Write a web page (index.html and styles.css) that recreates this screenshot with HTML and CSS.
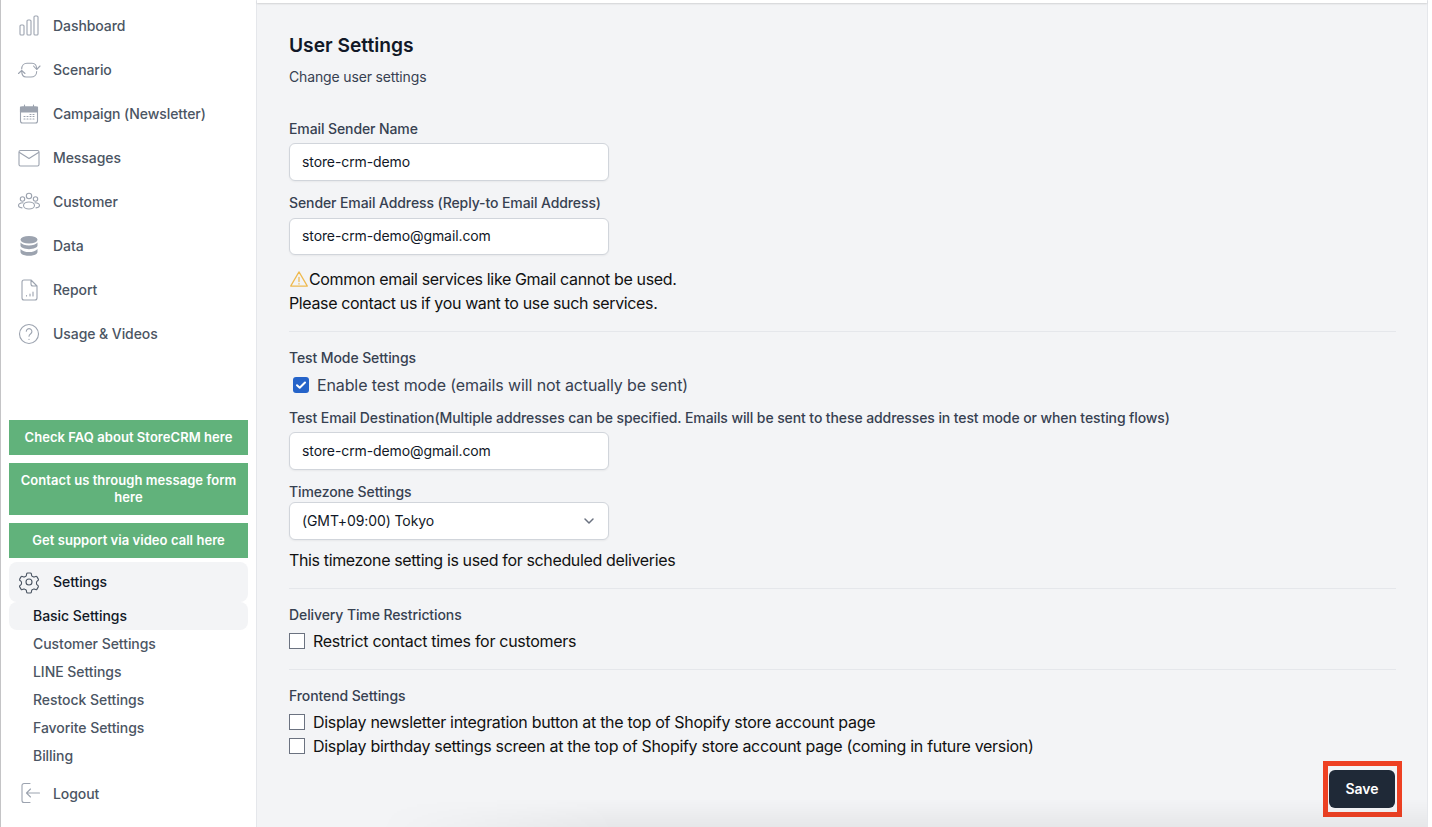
FILE: index.html
```html
<!DOCTYPE html>
<html lang="en">
<head>
<meta charset="utf-8">
<title>User Settings</title>
<link rel="stylesheet" href="styles.css">
</head>
<body>
<div class="app">
  <aside class="sidebar">
    <nav class="nav">
      <a class="nav-item"><svg class="icon" viewBox="0 0 24 24"><path d="M3 12.100c0-.6.5-1.100 1.100-1.100h1.800c.6 0 1.100.5 1.100 1.100v7.800c0 .6-.5 1.100-1.100 1.100H4.100C3.500 21 3 20.500 3 19.900zM10 7.100C10 6.500 10.500 6 11.100 6h1.800c.6 0 1.100.5 1.100 1.100v12.800c0 .6-.5 1.100-1.100 1.100h-1.800c-.6 0-1.100-.5-1.100-1.100zM17 3.100C17 2.500 17.500 2 18.100 2h1.800c.6 0 1.100.5 1.100 1.100v16.800c0 .6-.5 1.100-1.100 1.100h-1.800c-.6 0-1.100-.5-1.100-1.100z"/></svg>Dashboard</a>
      <a class="nav-item"><svg class="icon" viewBox="0 0 24 24"><path d="M4.700 11C4.700 7.500 7 5.300 10 5.300h5c3 0 4.700 2 4.700 6M16.500 8l3.200 3.500L23 8M19.700 13.500c0 3.500-2.700 5.500-5.700 5.500H9c-2.500 0-4.300-2-4.300-6M1.500 15.500l3.200-3 3.300 3"/></svg>Scenario</a>
      <a class="nav-item"><svg class="icon" viewBox="0 0 24 24"><rect x="3.500" y="5" width="17" height="16" rx="2"/><path class="solid" d="M3.500 5h17v5h-17z"/><path d="M7.500 3v3M16.500 3v3M7 17h1M10 17h1M13 17h1M7 14.500h1M10 14.500h1M13 14.500h1M16 14.500h1M13 12.500h1M16 12.500h1M16 17h1"/></svg>Campaign (Newsletter)</a>
      <a class="nav-item"><svg class="icon" viewBox="0 0 24 24"><rect x="2" y="4.500" width="20" height="15.500" rx="1.500"/><path d="m2.500 6.500 9.500 6 9.500-6"/></svg>Messages</a>
      <a class="nav-item"><svg class="icon" viewBox="0 0 24 24"><circle cx="12" cy="6" r="2.700"/><circle cx="5.500" cy="9" r="2.200"/><circle cx="18.500" cy="9" r="2.200"/><ellipse cx="12" cy="15.500" rx="5.500" ry="3.500"/><path d="M6 12.800c-2.500.2-4.500 1.300-4.500 2.700 0 1.200 1.500 2.100 3.500 2.400M18 12.800c2.500.2 4.500 1.300 4.500 2.700 0 1.200-1.500 2.100-3.500 2.400"/></svg>Customer</a>
      <a class="nav-item"><svg class="icon icon-fill" viewBox="0 0 24 24"><ellipse cx="12" cy="5.800" rx="8.500" ry="3.800"/><path d="M3.500 8.600v3c0 2 3.800 3.600 8.500 3.600s8.500-1.600 8.500-3.600v-3c-1.500 2-4.800 3-8.500 3s-7-1-8.500-3zM3.500 15v3c0 2.200 3.800 3.800 8.500 3.800s8.500-1.600 8.500-3.800v-3c-1.500 2-4.800 3.100-8.500 3.100S5 17 3.500 15z"/></svg>Data</a>
      <a class="nav-item"><svg class="icon" viewBox="0 0 24 24"><path d="M14 2H7a2 2 0 0 0-2 2v16a2 2 0 0 0 2 2h11a2 2 0 0 0 2-2V8zM14 2v4a2 2 0 0 0 2 2h4M9.500 18v-.5M13 18v-2M16 18v-4"/></svg>Report</a>
      <a class="nav-item"><svg class="icon" viewBox="0 0 24 24"><circle cx="12" cy="12" r="9.500"/><path d="M9.300 9.300a2.800 2.800 0 1 1 4.400 2.400c-1 .7-1.700 1.300-1.700 2.600M12 17.300v.2"/></svg>Usage &amp; Videos</a>
    </nav>
    <div class="bottom">
      <a class="cta">Check FAQ about StoreCRM here</a>
      <a class="cta">Contact us through message form here</a>
      <a class="cta">Get support via video call here</a>
      <a class="nav-item nav-settings"><svg class="icon icon-dark" viewBox="0 0 24 24"><path d="M9.600 3.900c.1-.5.6-.9 1.100-.9h2.600c.5 0 1 .4 1.100.9l.2 1.400c.1.400.3.700.6.900l1 .6c.3.200.7.200 1.100.1l1.300-.5c.5-.2 1.100 0 1.400.5l1.300 2.200c.3.500.2 1.100-.3 1.400l-1.100.9c-.3.200-.4.600-.4 1v1.200c0 .4.100.8.400 1l1.100.9c.4.300.5.900.3 1.400l-1.300 2.200c-.3.500-.9.700-1.400.5l-1.300-.5c-.4-.1-.8-.1-1.100.1l-1 .6c-.3.200-.5.500-.6.900l-.2 1.400c-.1.500-.6.900-1.100.9h-2.600c-.5 0-1-.4-1.100-.9l-.2-1.400c-.1-.4-.3-.7-.6-.9l-1-.6c-.3-.2-.7-.2-1.100-.1l-1.300.5c-.5.200-1.100 0-1.400-.5l-1.300-2.200c-.3-.5-.2-1.100.3-1.400l1.100-.9c.3-.2.4-.6.4-1v-1.200c0-.4-.1-.8-.4-1l-1.100-.9c-.4-.3-.5-.9-.3-1.400l1.300-2.200c.3-.5.9-.7 1.400-.5l1.300.5c.4.100.8.100 1.100-.1l1-.6c.3-.2.5-.5.6-.9z"/><circle cx="12" cy="12" r="3"/></svg>Settings</a>
      <div class="subnav">
        <a class="sub-item sub-active">Basic Settings</a>
        <a class="sub-item">Customer Settings</a>
        <a class="sub-item">LINE Settings</a>
        <a class="sub-item">Restock Settings</a>
        <a class="sub-item">Favorite Settings</a>
        <a class="sub-item">Billing</a>
      </div>
      <a class="nav-item nav-logout"><svg class="icon" viewBox="0 0 24 24"><path d="M13 2.500H7a2 2 0 0 0-2 2v15a2 2 0 0 0 2 2h6M22.500 12H10M13.500 8l-4 4 4 4"/></svg>Logout</a>
    </div>
  </aside>
  <main class="main">
    <div class="topbar"></div>
    <div class="content">
      <h1 class="title">User Settings</h1>
      <p class="subtitle">Change user settings</p>

      <label class="label label-first">Email Sender Name</label>
      <div class="input">store-crm-demo</div>
      <label class="label label-next">Sender Email Address (Reply-to Email Address)</label>
      <div class="input input-tall">store-crm-demo@gmail.com</div>
      <p class="note note-warn"><svg class="warn" viewBox="0 0 24 24"><path d="M12 3.500 2 20.500h20zM12 10v5M12 17.500v.5"/></svg>Common email services like Gmail cannot be used.</p>
      <p class="note">Please contact us if you want to use such services.</p>
      <hr class="rule">

      <div class="label">Test Mode Settings</div>
      <label class="check check-test"><span class="box box-on"><svg viewBox="0 0 16 16"><path d="m4 8.300 2.700 2.500L12 5.500"/></svg></span>Enable test mode (emails will not actually be sent)</label>
      <label class="label label-dest">Test Email Destination(Multiple addresses can be specified. Emails will be sent to these addresses in test mode or when testing flows)</label>
      <div class="input">store-crm-demo@gmail.com</div>
      <label class="label label-next-tight">Timezone Settings</label>
      <div class="input select">(GMT+09:00) Tokyo<svg class="chev" viewBox="0 0 20 20"><path d="m6 8 4 4 4-4"/></svg></div>
      <p class="note note-tz">This timezone setting is used for scheduled deliveries</p>
      <hr class="rule">

      <div class="label">Delivery Time Restrictions</div>
      <label class="check"><span class="box"></span>Restrict contact times for customers</label>
      <hr class="rule">

      <div class="label">Frontend Settings</div>
      <label class="check"><span class="box"></span>Display newsletter integration button at the top of Shopify store account page</label>
      <label class="check"><span class="box"></span>Display birthday settings screen at the top of Shopify store account page (coming in future version)</label>

      <div class="actions"><button class="save">Save</button></div>
    </div>
    <div class="highlight"></div>
    <div class="fade"></div>
  </main>
  <div class="edge"></div>
</div>
</body>
</html>
```

FILE: styles.css
```css
* { box-sizing: border-box; }
html, body { margin: 0; height: 100%; overflow: hidden; }
body { font-family: Inter, "Liberation Sans", sans-serif; background: #f3f4f6; color: #111827; }
.app { display: flex; height: 827px; }

.sidebar {
  width: 257px; flex: none; display: flex; flex-direction: column; justify-content: space-between;
  background: #fff; border-left: 1px solid #c4c4c6; border-right: 1px solid #e5e7eb;
  padding: 3px 8px 12px;
}
.nav { display: flex; flex-direction: column; }
.nav-item {
  display: flex; align-items: center; gap: 12px; height: 44px; padding: 0 8px;
  font-size: 14px; font-weight: 500; color: #4b5563; border-radius: 8px; letter-spacing: -.07px;
}
.icon { width: 24px; height: 24px; flex: none; fill: none; stroke: #9ca3af; stroke-width: 1.100; stroke-linecap: round; stroke-linejoin: round; }
.nav .icon { margin-top: 1px; }
.icon .solid { fill: #9ca3af; stroke: #9ca3af; }
.icon-fill { fill: #9ca3af; stroke: none; }
.icon-dark { stroke: #4b5563; }

.bottom { display: flex; flex-direction: column; }
.cta {
  display: block; padding: 9px 8px; margin-bottom: 8px; background: #61b27b; color: #fff;
  font-size: 13px; line-height: 17px; font-weight: 600; text-align: center; letter-spacing: .05px;
}
.cta:nth-child(3) { margin-bottom: 4px; }
.nav-settings { height: 40px; padding-bottom: 1px; background: #f3f4f6; color: #111827; }
.subnav { display: flex; flex-direction: column; }
.sub-item { height: 28px; padding-left: 24px; line-height: 28px; font-size: 14px; font-weight: 500; color: #4b5563; border-radius: 8px; letter-spacing: -.05px; }
.sub-active { background: #f3f4f6; color: #111827; }
.nav-logout { height: 44px; margin-top: 1px; }

.main { position: relative; flex: 1; min-width: 0; }
.topbar { height: 3px; background: #fff; box-shadow: 0 1px 2px rgba(0,0,0,.14); }
.content { padding: 28px 31px 0 32px; }
.title { margin: 0; font-size: 19.2px; line-height: 28px; font-weight: 600; color: #111827; }
.subtitle { margin: 8px 0 0; font-size: 14px; line-height: 20px; color: #374151; letter-spacing: -.15px; }
.label { display: block; font-size: 14px; line-height: 20px; font-weight: 500; color: #374151; letter-spacing: -.1px; }
.label-first { margin-top: 32px; margin-bottom: 4px; }
.label-next { margin-top: 12px; margin-bottom: 5px; }
.label-dest { margin-top: 11px; margin-bottom: 4px; }
.label-next-tight { margin-top: 12px; }
.input {
  width: 320px; height: 38px; padding: 0 12px 2px; display: flex; align-items: center;
  background: #fff; border: 1px solid #d1d5db; border-radius: 6px; box-shadow: 0 1px 2px rgba(0,0,0,.05);
  font-size: 14px; color: #111827; letter-spacing: -.1px;
}
.input-tall { height: 37px; }
.select { justify-content: space-between; padding-right: 9px; }
.chev { width: 20px; height: 20px; margin-top: 2px; fill: none; stroke: #6b7280; stroke-width: 1.500; stroke-linecap: round; stroke-linejoin: round; }
.note { margin: 0; font-size: 16px; line-height: 24px; color: #111; letter-spacing: -.36px; }
.note-warn { display: flex; align-items: center; margin-top: 12px; }
.note-tz { margin-top: 8px; }
.warn { width: 20px; height: 20px; flex: none; fill: none; stroke: #eeb94f; stroke-width: 1.500; stroke-linejoin: round; stroke-linecap: round; }
.rule { margin: 16px 0; border: 0; border-top: 1px solid #e5e7eb; }
.check { display: flex; align-items: center; gap: 8px; height: 24px; font-size: 16px; color: #111; letter-spacing: -.3px; }
.label + .check { margin-top: 4px; }
.label + .check-test { margin-top: 5px; padding-left: 4px; color: #374151; letter-spacing: -.12px; }
.box { width: 16px; height: 16px; flex: none; background: #fff; border: 1px solid #6b7280; }
.box-on { background: #2563c9; border: 0; border-radius: 3px; }
.box-on svg { display: block; width: 16px; height: 16px; fill: none; stroke: #fff; stroke-width: 2; stroke-linecap: round; stroke-linejoin: round; }
.actions { display: flex; justify-content: flex-end; margin-top: 12px; padding-right: 1px; }
.save {
  width: 66px; height: 38px; padding-bottom: 2px; border: 0; border-radius: 6px; background: #1f2937; color: #fff;
  font: 600 14px Inter, "Liberation Sans", sans-serif;
}
.highlight { position: absolute; left: 1066px; top: 761px; width: 79px; height: 56px; border: 5px solid #ee4123; pointer-events: none; }
.fade {
  position: absolute; left: 120px; right: 0; bottom: 0; height: 28px; pointer-events: none;
  background: linear-gradient(to bottom, rgba(0,0,0,0), rgba(0,0,0,.05));
  -webkit-mask-image: linear-gradient(to right, transparent, #000 240px);
  mask-image: linear-gradient(to right, transparent, #000 240px);
}
.edge { width: 5px; flex: none; background: #fff; border-left: 1px solid #e5e7eb; }
```
